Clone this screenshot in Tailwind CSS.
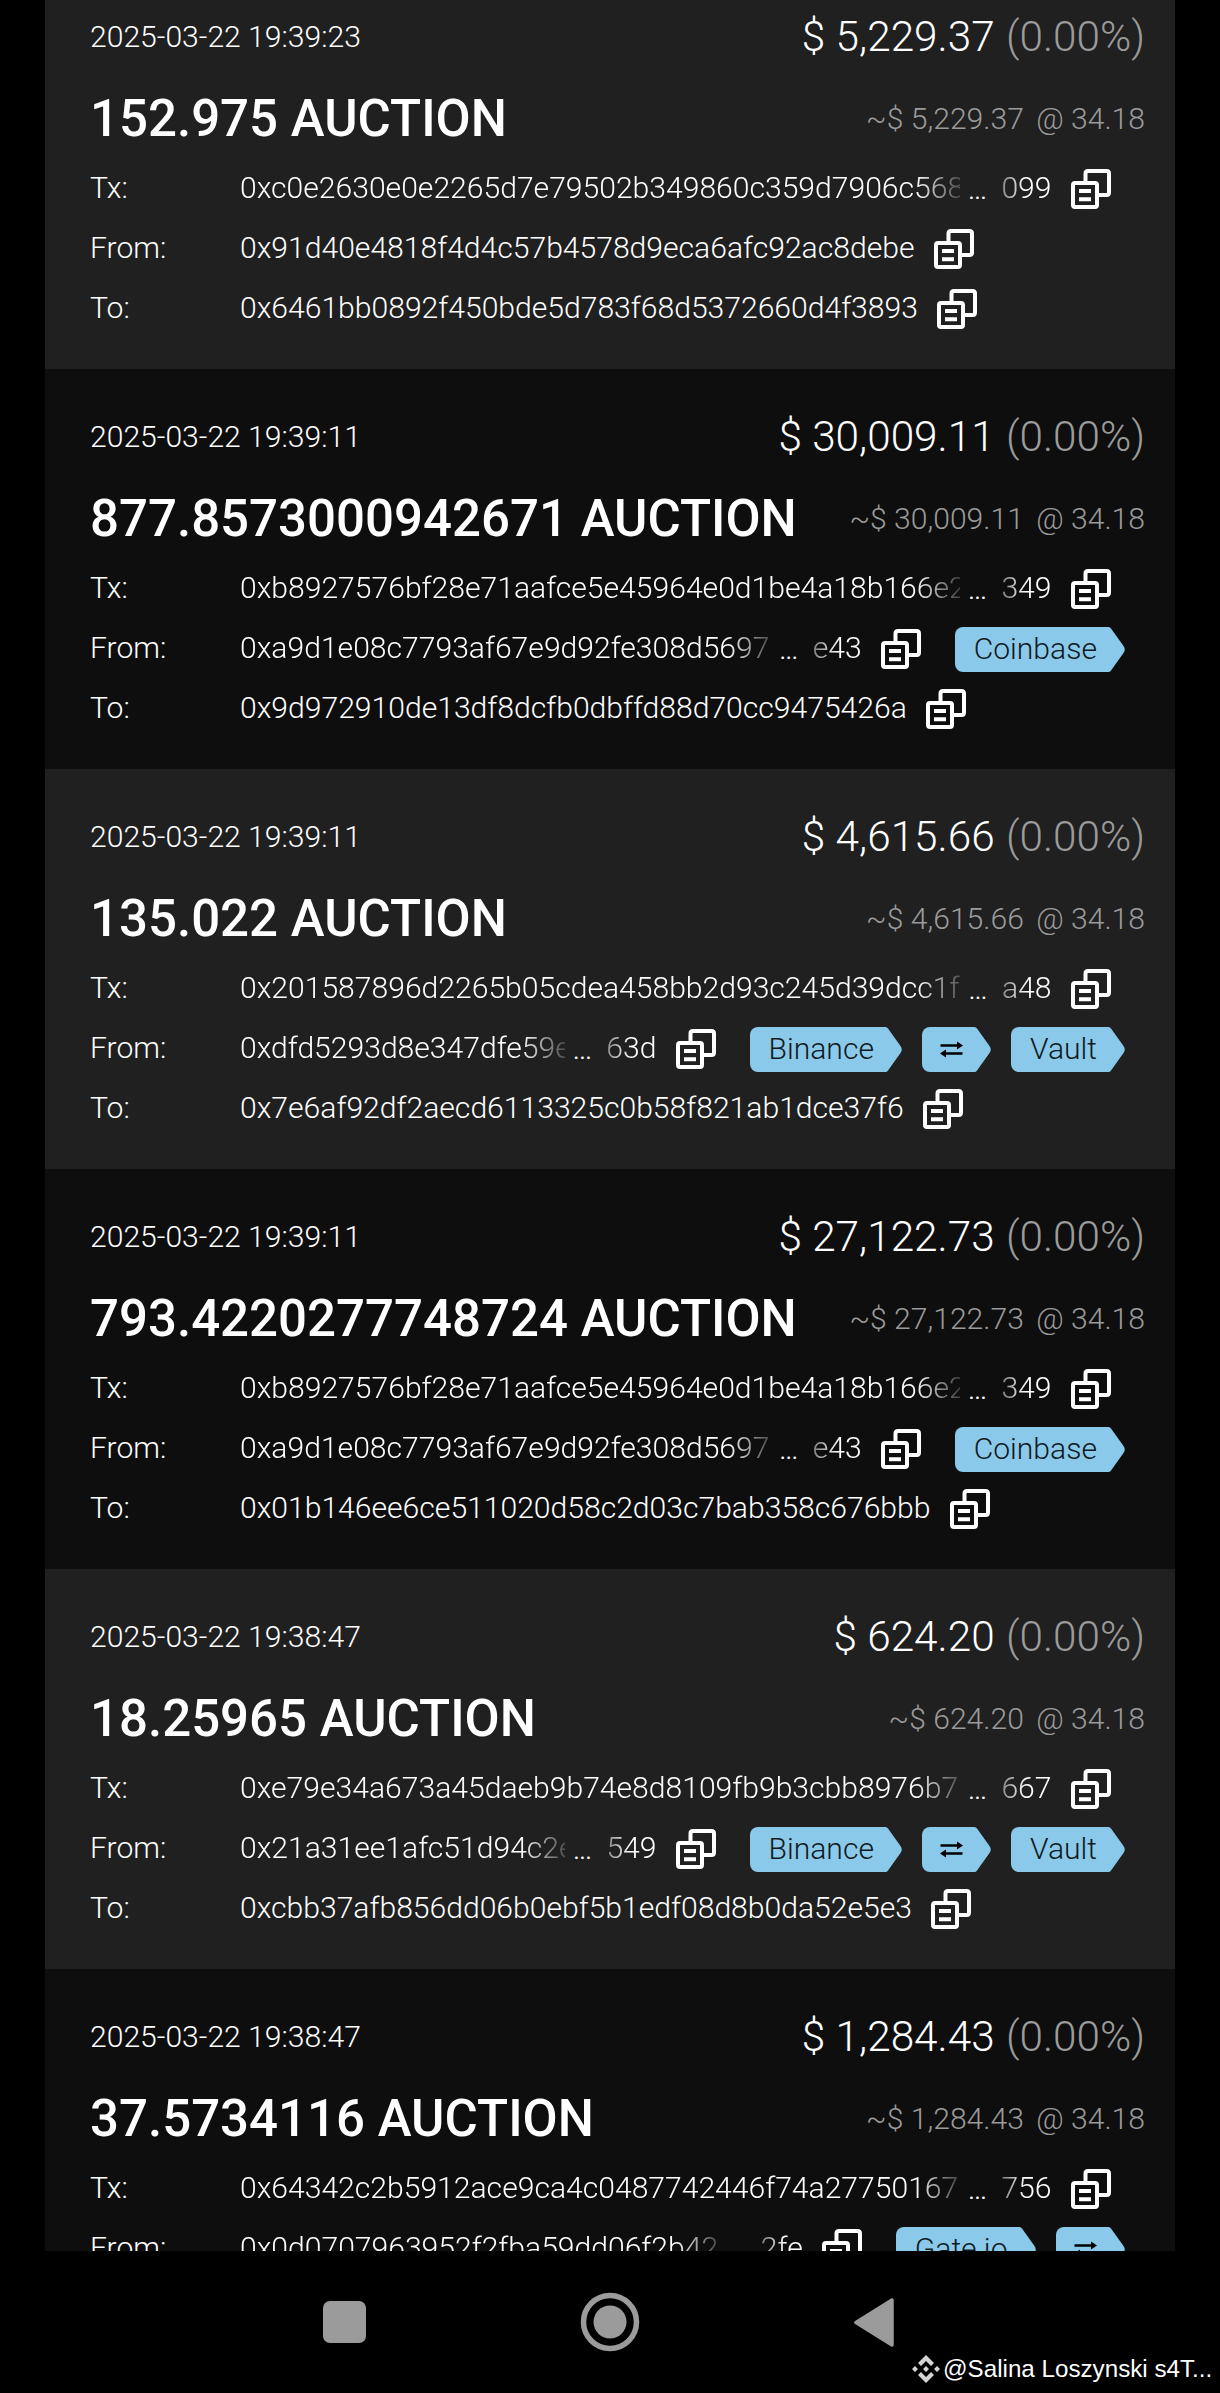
<!DOCTYPE html>
<html lang="en">

<head>
    <meta charset="utf-8">
    <title>AUCTION transfers</title>
    <script src="https://cdn.jsdelivr.net/npm/@tailwindcss/browser@4"></script>
</head>

<body class="bg-black text-white font-['Roboto',sans-serif] font-light text-[30.1px] w-[1220px] h-[2393px] overflow-hidden flex flex-col">
    <svg class="hidden">
        <symbol id="copy" viewBox="0 0 40 40">
            <path d="M14.5 13V4.500Q14.500 2 17 2H35.500Q38 2 38 4.500V23.500Q38 26 35.500 26H27" fill="none" stroke="currentColor" stroke-width="4" />
            <rect x="2" y="14" width="24" height="24" rx="2" fill="none" stroke="currentColor" stroke-width="4" />
            <path d="M8 22H20M8 30.200H20" fill="none" stroke="currentColor" stroke-width="4" />
        </symbol>
        <symbol id="swap" viewBox="0 0 23 17">
            <path d="M0.500 4.500H18M5 12.500H22.500" fill="none" stroke="currentColor" stroke-width="2.600" />
            <path d="M17 0.500L23 4.500L17 8.500ZM6 8.500L0 12.500L6 16.500Z" fill="currentColor" />
        </symbol>
    </svg>

    <main id="list" class="h-[2251px] shrink-0 overflow-hidden pl-[45px] pr-[45px]"></main>

    <nav class="relative h-[142px] shrink-0 text-[#9b9b9b]">
        <div class="flex h-full items-center justify-between pl-[323px] pr-[326px]">
            <svg width="43" height="42" viewBox="0 0 43 42"><rect width="43" height="42" rx="7" fill="currentColor" /></svg>
            <svg width="60" height="60" viewBox="0 0 60 60">
                <circle cx="30" cy="30" r="26.500" fill="none" stroke="currentColor" stroke-width="5.500" />
                <circle cx="30" cy="30" r="16.500" fill="currentColor" />
            </svg>
            <svg width="40" height="49" viewBox="0 0 40 49"><path d="M2 24.500L38 2V47Z" fill="currentColor" stroke="currentColor" stroke-width="3.500" stroke-linejoin="round" /></svg>
        </div>
        <div class="absolute left-[912px] top-[104px] flex items-center gap-[3px] whitespace-nowrap font-['Liberation_Sans',sans-serif] text-[24.2px] font-normal leading-[28px] text-white">
            <svg width="28" height="28" viewBox="0 0 28 28" fill="#d4d4d4">
                <path d="M14 0L22 8L19 11L14 6L9 11L6 8ZM14 28L22 20L19 17L14 22L9 17L6 20ZM14 11L17 14L14 17L11 14ZM3 11L6 14L3 17L0 14ZM25 11L28 14L25 17L22 14Z" />
            </svg>
            <span>@Salina Loszynski s4T...</span>
        </div>
    </nav>

    <script>
        const transfers = [
            { time: '2025-03-22 19:39:23', usd: '5,229.37', amount: '152.975', tx: ['0xc0e2630e0e2265d7e79502b349860c359d7906c568', '099'], from: ['0x91d40e4818f4d4c57b4578d9eca6afc92ac8debe'], to: '0x6461bb0892f450bde5d783f68d5372660d4f3893' },
            { time: '2025-03-22 19:39:11', usd: '30,009.11', amount: '877.8573000942671', tx: ['0xb8927576bf28e71aafce5e45964e0d1be4a18b166e2', '349'], from: ['0xa9d1e08c7793af67e9d92fe308d5697', 'e43'], tags: ['Coinbase'], to: '0x9d972910de13df8dcfb0dbffd88d70cc9475426a' },
            { time: '2025-03-22 19:39:11', usd: '4,615.66', amount: '135.022', tx: ['0x201587896d2265b05cdea458bb2d93c245d39dcc1f', 'a48'], from: ['0xdfd5293d8e347dfe59e', '63d'], tags: ['Binance', 'swap', 'Vault'], to: '0x7e6af92df2aecd6113325c0b58f821ab1dce37f6' },
            { time: '2025-03-22 19:39:11', usd: '27,122.73', amount: '793.4220277748724', tx: ['0xb8927576bf28e71aafce5e45964e0d1be4a18b166e2', '349'], from: ['0xa9d1e08c7793af67e9d92fe308d5697', 'e43'], tags: ['Coinbase'], to: '0x01b146ee6ce511020d58c2d03c7bab358c676bbb' },
            { time: '2025-03-22 19:38:47', usd: '624.20', amount: '18.25965', tx: ['0xe79e34a673a45daeb9b74e8d8109fb9b3cbb8976b7', '667'], from: ['0x21a31ee1afc51d94c2e', '549'], tags: ['Binance', 'swap', 'Vault'], to: '0xcbb37afb856dd06b0ebf5b1edf08d8b0da52e5e3' },
            { time: '2025-03-22 19:38:47', usd: '1,284.43', amount: '37.5734116', tx: ['0x64342c2b5912ace9ca4c0487742446f74a27750167', '756'], from: ['0x0d0707963952f2fba59dd06f2b42', '2fe'], tags: ['Gate.io', 'swap'], to: '0x1c4b70a3968436b9a0a9cf5205c787eb81bb558c' },
        ];

        const tag = (name) => `
            <span class="relative top-px ml-5 flex h-[45px] shrink-0 items-center text-[#0f1a20]">
                <span class="flex h-full items-center rounded-l-lg bg-[#8bc9eb] pl-[18.5px] pr-[11px]">${name === 'swap'
                ? '<svg class="h-[17px] w-[23px] text-black"><use href="#swap" /></svg>' : name}</span>
                <svg class="-ml-px" width="18" height="45" viewBox="0 0 18 45"><path d="M0 0H1.500Q3 0 4 1.500L16.500 19Q19 22.500 16.500 26L4 43.500Q3 45 1.500 45H0Z" fill="#8bc9eb" /></svg>
            </span>`;

        const row = (label, [head, tail], tags = []) => `
            <div class="flex h-[60px] items-center">
                <span class="w-[150px] shrink-0">${label}:</span>
                <span class="flex min-w-0 flex-1 items-center">
                    ${tail ? `
                    <span class="min-w-0 flex-1 overflow-hidden whitespace-nowrap [mask-image:linear-gradient(to_left,rgba(0,0,0,.2),black_45px)]">${head}</span>
                    <span class="relative top-1 w-[41px] shrink-0 pl-2 text-[23px] font-normal">...</span>
                    <span class="shrink-0 [mask-image:linear-gradient(to_right,rgba(0,0,0,.45),black_25px)]">${tail}</span>` : `
                    <span class="shrink-0">${head}</span>`}
                    <svg class="relative top-px ml-[19.5px] mr-[14px] size-10 shrink-0"><use href="#copy" /></svg>
                    ${tags.map(tag).join('')}
                </span>
            </div>`;

        document.getElementById('list').innerHTML = transfers.map((t) => `
            <section class="h-[400px] pl-[45px] pr-[50px] pt-7 leading-[40px] odd:bg-[#202020] even:bg-[#0e0e0e] first:-mt-[31px]">
                <div class="-mr-5 flex h-20 items-center justify-between">
                    <span>${t.time}</span>
                    <span class="text-[42.3px]">$ ${t.usd} <span class="ml-px text-[#9b9b9b]">(0.00%)</span></span>
                </div>
                <div class="-mr-5 flex h-[81px] items-center justify-between whitespace-nowrap pt-[2px]">
                    <span class="text-[51px] font-medium">${t.amount} AUCTION</span>
                    <span class="text-[#9b9b9b]">~$ ${t.usd} <span class="ml-[5px]">@ 34.18</span></span>
                </div>
                ${row('Tx', t.tx)}
                ${row('From', t.from, t.tags)}
                ${row('To', [t.to])}
            </section>`).join('');
    </script>
</body>

</html>
